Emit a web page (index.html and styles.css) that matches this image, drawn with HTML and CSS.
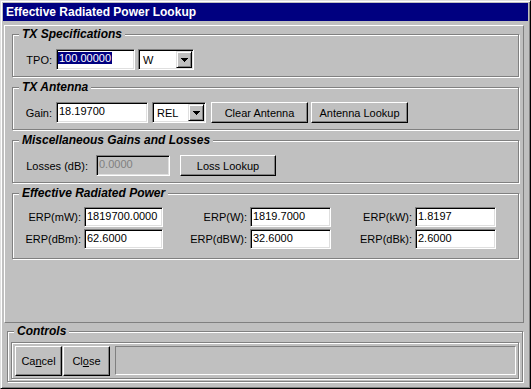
FILE: index.html
```html
<!DOCTYPE html>
<html lang="en">
<head>
    <meta charset="UTF-8">
    <title>Effective Radiated Power Lookup</title>
    <link rel="stylesheet" href="styles.css">
</head>
<body>
    <div class="window">
        <div class="titlebar">Effective Radiated Power Lookup</div>

        <div class="client">
            <div class="panel">
                <!-- TX specs -->
                <fieldset class="group">
                    <legend>TX Specifications</legend>
                    <div class="row">
                        <span class="lbl lbl-short">TPO:</span>
                        <div class="field f-tpo"><span class="selected">100.00000</span></div>
                        <div class="combo c-unit">
                            <span class="combo-val">W</span>
                            <span class="drop"><svg width="7" height="4" viewBox="0 0 7 4" shape-rendering="crispEdges"><path d="M0 0h7v1h-1v1h-1v1h-1v1h-1v-1h-1v-1h-1v-1h-1z"/></svg></span>
                        </div>
                    </div>
                </fieldset>

                <!-- antenna -->
                <fieldset class="group">
                    <legend>TX Antenna</legend>
                    <div class="row">
                        <span class="lbl lbl-short">Gain:</span>
                        <div class="field f-gain">18.19700</div>
                        <div class="combo c-rel">
                            <span class="combo-val">REL</span>
                            <span class="drop"><svg width="7" height="4" viewBox="0 0 7 4" shape-rendering="crispEdges"><path d="M0 0h7v1h-1v1h-1v1h-1v1h-1v-1h-1v-1h-1v-1h-1z"/></svg></span>
                        </div>
                        <button class="btn b-clear">Clear Antenna</button>
                        <button class="btn b-ant">Antenna Lookup</button>
                    </div>
                </fieldset>

                <!-- misc -->
                <fieldset class="group">
                    <legend>Miscellaneous Gains and Losses</legend>
                    <div class="row">
                        <span class="lbl lbl-loss">Losses (dB):</span>
                        <div class="field f-loss disabled">0.0000</div>
                        <button class="btn b-loss">Loss Lookup</button>
                    </div>
                </fieldset>

                <!-- erp results -->
                <fieldset class="group group-erp">
                    <legend>Effective Radiated Power</legend>
                    <div class="erp-grid">
                        <span class="lbl">ERP(mW):</span>
                        <div class="field">1819700.0000</div>
                        <span class="lbl">ERP(W):</span>
                        <div class="field">1819.7000</div>
                        <span class="lbl">ERP(kW):</span>
                        <div class="field">1.8197</div>

                        <span class="lbl">ERP(dBm):</span>
                        <div class="field">62.6000</div>
                        <span class="lbl">ERP(dBW):</span>
                        <div class="field">32.6000</div>
                        <span class="lbl">ERP(dBk):</span>
                        <div class="field">2.6000</div>
                    </div>
                </fieldset>
            </div>

            <fieldset class="group group-controls">
                <legend>Controls</legend>
                <div class="ctl-box">
                    <button class="btn b-big">Ca<u>n</u>cel</button>
                    <button class="btn b-big b-close">Cl<u>o</u>se</button>
                    <div class="status"></div>
                </div>
            </fieldset>
        </div>
    </div>
</body>
</html>
```

FILE: styles.css
```css
* {
    box-sizing: border-box;
}

body {
    margin: 0;
    background: #c0c0c0;
    font-family: "Liberation Sans", Arial, sans-serif;
    font-size: 11px;
    color: #000;
}

.window {
    width: 531px;
    height: 389px;
    padding: 2px;
    background: #c0c0c0;
    border: 1px solid;
    border-color: #dfdfdf #000 #000 #dfdfdf;
    box-shadow: inset 1px 1px #fff, inset -1px -1px #808080;
}

.titlebar {
    height: 18px;
    padding-left: 3px;
    background: #000080;
    color: #fff;
    font-size: 12px;
    font-weight: bold;
    line-height: 18px;
}

.panel {
    width: 520px;
    height: 298px;
    margin: 4px 0 0 1px;
    padding: 2px 4px 0 7px;
    border: 1px solid;
    border-color: #fff #808080 #808080 #fff;
}

/* etched group box */
.group {
    display: block;
    min-width: 0;
    margin: 0;
    padding: 8px 0 6px;
    border: 1px solid #808080;
    box-shadow: inset 1px 1px #fff, 1px 1px #fff;
}

.group + .group {
    margin-top: 4px;
}

.group legend {
    margin-left: 6px;
    padding: 0 3px;
    background: #c0c0c0;
    font-size: 12px;
    font-weight: bold;
    font-style: italic;
    line-height: 13px;
}

.row {
    display: flex;
    align-items: center;
    height: 21px;
}

.lbl {
    display: block;
    text-align: right;
    white-space: nowrap;
}

.lbl-short {
    width: 39px;
    margin-right: 4px;
}

.lbl-loss {
    width: 75px;
    margin-right: 8px;
}

/* sunken edit box */
.field {
    height: 21px;
    padding-left: 2px;
    background: #fff;
    border: 1px solid;
    border-color: #808080 #fff #fff #808080;
    box-shadow: inset 1px 1px #000, inset -1px -1px #dfdfdf;
    line-height: 17px;
    white-space: nowrap;
    overflow: hidden;
}

.field.disabled {
    background: #c0c0c0;
    color: #808080;
}

.selected {
    display: inline-block;
    margin-left: -1px;
    padding: 0 1px;
    background: #000080;
    color: #fff;
    line-height: 12px;
}

.f-tpo { width: 79px; }
.f-gain { width: 92px; }
.f-loss { width: 74px; }

.combo {
    display: flex;
    align-items: center;
    height: 21px;
    padding: 1px;
    background: #fff;
    border: 1px solid;
    border-color: #808080 #fff #fff #808080;
    box-shadow: inset 1px 1px #000, inset -1px -1px #dfdfdf;
}

.combo-val {
    flex: 1;
    padding-left: 3px;
}

.c-unit {
    width: 56px;
    margin-left: 3px;
}

.c-rel {
    width: 54px;
    margin-left: 4px;
}

.drop {
    display: flex;
    align-items: center;
    justify-content: center;
    width: 16px;
    height: 17px;
    background: #c0c0c0;
    border: 1px solid;
    border-color: #dfdfdf #000 #000 #dfdfdf;
    box-shadow: inset 1px 1px #fff, inset -1px -1px #808080;
}

.btn {
    height: 21px;
    padding: 0;
    background: #c0c0c0;
    border: 1px solid;
    border-color: #fff #000 #000 #fff;
    box-shadow: inset -1px -1px #808080;
    font-family: inherit;
    font-size: 11px;
    color: #000;
}

.b-clear {
    width: 97px;
    margin-left: 5px;
}

.b-ant {
    width: 97px;
    margin-left: 3px;
}

.b-loss {
    width: 96px;
    margin-left: 10px;
}

.group-erp {
    padding: 7px 0 9px;
}

.erp-grid {
    display: grid;
    grid-template-columns: 71px 79px 87px 81px 84px 81px;
    row-gap: 2px;
    align-items: center;
}

.erp-grid .lbl {
    padding-right: 3px;
}

.erp-grid .field {
    height: 20px;
    line-height: 16px;
}

.group-controls {
    width: 516px;
    margin: 2px 0 0 4px;
    padding: 4px 3px 2px;
}

.group-controls legend {
    margin-left: 3px;
}

.ctl-box {
    display: flex;
    align-items: flex-start;
    height: 37px;
    padding: 3px 2px 2px 3px;
    border: 1px solid #808080;
    box-shadow: inset 1px 1px #fff, 1px 1px #fff;
}

.b-big {
    width: 47px;
    height: 30px;
}

.b-close {
    margin-left: 1px;
}

.status {
    flex: 1;
    height: 29px;
    margin-left: 5px;
    border: 1px solid;
    border-color: #808080 #fff #fff #808080;
}
```
